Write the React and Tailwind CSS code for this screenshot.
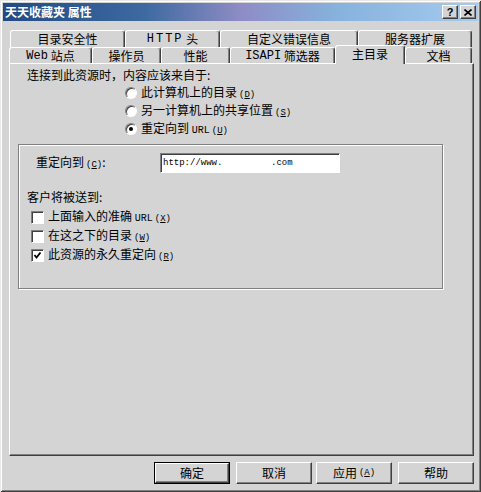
import React from 'react';

const raised = "border border-t-white border-l-white border-r-[#404040] border-b-[#404040] shadow-[inset_-1px_-1px_0_#808080]";
const sunken = "border border-t-[#808080] border-l-[#808080] border-r-white border-b-white shadow-[inset_1px_1px_0_#404040]";
const tabBase = "flex items-center justify-center border-t border-l border-r border-t-white border-l-white border-r-[#404040] rounded-t-[3px] shadow-[inset_-1px_0_0_#808080] bg-[#d4d4d4]";

// latin words inside tab labels
const TabLat = ({ children, wide }) => (
    <span className={wide ? "font-['Liberation_Mono',monospace] text-[12px] tracking-[2px]" : "font-['Liberation_Mono',monospace] text-[12px]"}>{children}</span>
);

const Lat = ({ children }) => (
    <span className="font-['Liberation_Mono',monospace] text-[10px]">{children}</span>
);

const Acc = ({ k }) => (
    <span className="font-['Liberation_Mono',monospace] text-[9px] ml-[2px]">(<u>{k}</u>)</span>
);

const Radio = ({ checked, children }) => (
    <div className="h-[18px] flex items-center pl-[115px]">
        <div className="w-[12px] h-[12px] rounded-full bg-white border border-t-[#808080] border-l-[#808080] border-r-white border-b-white shadow-[inset_1px_1px_0_#404040] flex items-center justify-center">
            {checked && <div className="w-[4px] h-[4px] rounded-full bg-black"></div>}
        </div>
        <span className="ml-[4px]">{children}</span>
    </div>
);

const Check = ({ checked, children }) => (
    <div className="h-[19px] flex items-center pl-[12px]">
        <div className={`w-[13px] h-[13px] bg-white flex items-center justify-center ${sunken}`}>
            {checked && (
                <svg width="9" height="9" viewBox="0 0 9 9">
                    <path d="M1.5 4 L3.5 6.5 L7.5 1.5" stroke="#000" strokeWidth="1.8" fill="none" />
                </svg>
            )}
        </div>
        <span className="ml-[4px]">{children}</span>
    </div>
);

const App = () => {
    return (
        <div className="w-[481px] h-[492px] bg-[#d4d4d4] flex flex-col text-[12px] leading-[12px] text-black font-['Noto_Sans_CJK_SC',sans-serif] shadow-[inset_1px_1px_0_#e8e8e8,inset_-1px_-1px_0_#404040,inset_2px_2px_0_#ffffff,inset_-2px_-2px_0_#808080] overflow-hidden">
            {/* title bar */}
            <div className="mx-[3px] mt-[3px] h-[18px] flex items-center justify-between bg-[linear-gradient(to_right,#1f4a84_0%,#3e6aa0_30%,#8e8cc4_50%,#86b2dc_70%,#a6caf0_100%)]">
                <span className="ml-[2px] text-white font-bold text-[12px]">天天收藏夹 属性</span>
                <div className="flex gap-[2px] mr-[2px]">
                    <div className={`w-[16px] h-[14px] bg-[#d4d4d4] flex items-center justify-center font-bold text-[11px] font-['Liberation_Sans',sans-serif] ${raised}`}>?</div>
                    <div className={`w-[16px] h-[14px] bg-[#d4d4d4] flex items-center justify-center ${raised}`}>
                        <svg width="8" height="7" viewBox="0 0 8 7">
                            <path d="M0.5 0.5 L7.5 6.5 M7.5 0.5 L0.5 6.5" stroke="#000" strokeWidth="1.6" />
                        </svg>
                    </div>
                </div>
            </div>

            {/* tab row 1 */}
            <div className="mt-[9px] ml-[10px] h-[17px] flex">
                <div className={`w-[115px] h-[17px] ${tabBase}`}>目录安全性</div>
                <div className={`w-[95px] h-[17px] ${tabBase}`}><TabLat wide>HTTP</TabLat>&nbsp;头</div>
                <div className={`w-[138px] h-[17px] ${tabBase}`}>自定义错误信息</div>
                <div className={`w-[114px] h-[17px] ${tabBase}`}>服务器扩展</div>
            </div>

            {/* tab row 2 */}
            <div className="ml-[9px] h-[16px] flex items-start">
                <div className={`w-[83px] h-[16px] ${tabBase}`}><TabLat>Web</TabLat>&nbsp;站点</div>
                <div className={`w-[69px] h-[16px] ${tabBase}`}>操作员</div>
                <div className={`w-[69px] h-[16px] ${tabBase}`}>性能</div>
                <div className={`w-[105px] h-[16px] ${tabBase}`}><TabLat>ISAPI</TabLat>&nbsp;筛选器</div>
                <div className={`w-[70px] h-[19px] -mt-[2px] relative z-10 pb-[3px] ${tabBase}`}>主目录</div>
                <div className={`w-[67px] h-[16px] ${tabBase}`}>文档</div>
            </div>

            {/* panel */}
            <div className={`ml-[9px] w-[465px] h-[393px] flex flex-col ${raised}`}>
                <div className="mt-[5px] pl-[17px] h-[12px]">连接到此资源时，内容应该来自于:</div>
                <div className="mt-[3px]">
                    <Radio>此计算机上的目录<Acc k="D" /></Radio>
                    <Radio>另一计算机上的共享位置<Acc k="S" /></Radio>
                    <Radio checked>重定向到 <Lat>URL</Lat><Acc k="U" /></Radio>
                </div>

                <div className="mt-[6px] ml-[8px] w-[425px] h-[145px] border border-[#808080] shadow-[1px_1px_0_#ffffff,inset_1px_1px_0_#ffffff] flex flex-col">
                    <div className="mt-[8px] h-[20px] flex items-center">
                        <span className="w-[141px] pl-[17px]">重定向到<Acc k="C" />:</span>
                        <div className={`w-[180px] h-[20px] bg-white flex items-center pl-[2px] ${sunken}`}>
                            <span className="font-['Liberation_Mono',monospace] text-[9px] whitespace-pre">http://www.         .com</span>
                        </div>
                    </div>
                    <div className="mt-[18px] pl-[8px] h-[12px]">客户将被送到:</div>
                    <div className="mt-[5px]">
                        <Check>上面输入的准确 <Lat>URL</Lat><Acc k="X" /></Check>
                        <Check>在这之下的目录<Acc k="W" /></Check>
                        <Check checked>此资源的永久重定向<Acc k="R" /></Check>
                    </div>
                </div>
            </div>

            {/* buttons */}
            <div className="mt-[6px] pl-[154px] flex">
                <div className="w-[76px] h-[22px] border border-black">
                    <div className={`w-full h-full flex items-center justify-center ${raised}`}>确定</div>
                </div>
                <div className={`ml-[6px] w-[76px] h-[22px] flex items-center justify-center ${raised}`}>取消</div>
                <div className={`ml-[4px] w-[76px] h-[22px] flex items-center justify-center ${raised}`}>应用<Acc k="A" /></div>
                <div className={`ml-[6px] w-[76px] h-[22px] flex items-center justify-center ${raised}`}>帮助</div>
            </div>
        </div>
    );
};

export default App;
